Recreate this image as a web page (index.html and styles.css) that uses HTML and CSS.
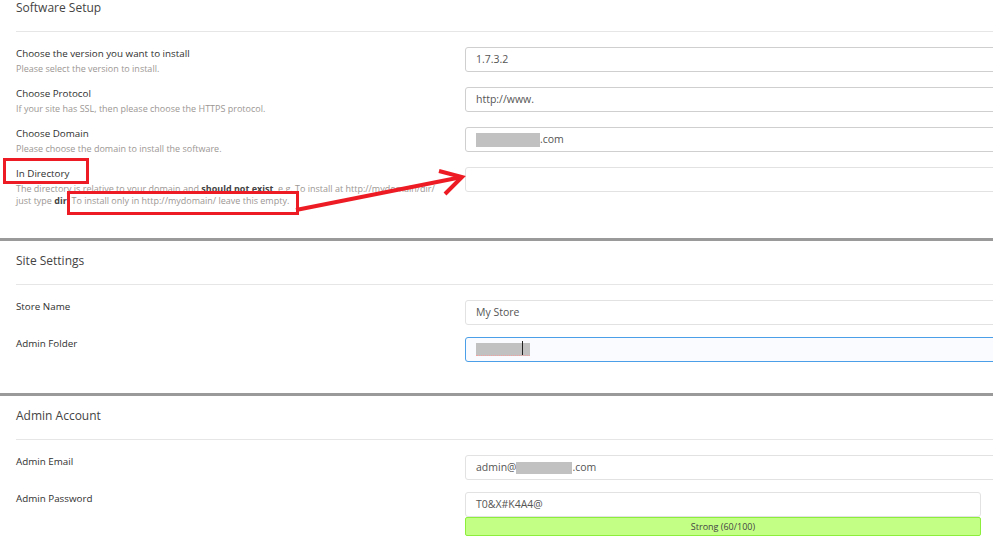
FILE: index.html
```html
<!DOCTYPE html>
<html lang="en">
<head>
    <meta charset="UTF-8">
    <meta name="viewport" content="width=device-width, initial-scale=1.0">
    <title>Software Setup</title>
    <link rel="stylesheet" href="styles.css">
</head>
<body>
<div class="page">

    <!-- SOFTWARE SETUP -->
    <section class="section section-first">
        <h2 class="section-title">Software Setup</h2>
        <div class="rows">
            <div class="row">
                <div class="row-label">
                    <div class="label">Choose the version you want to install</div>
                    <div class="desc">Please select the version to install.</div>
                </div>
                <div class="field">1.7.3.2</div>
            </div>
            <div class="row">
                <div class="row-label">
                    <div class="label">Choose Protocol</div>
                    <div class="desc">If your site has SSL, then please choose the HTTPS protocol.</div>
                </div>
                <div class="field">http://www.</div>
            </div>
            <div class="row">
                <div class="row-label">
                    <div class="label">Choose Domain</div>
                    <div class="desc">Please choose the domain to install the software.</div>
                </div>
                <div class="field"><span class="blur blur-domain"></span>.com</div>
            </div>
            <div class="row">
                <div class="row-label">
                    <div class="label">In Directory</div>
                    <div class="desc">The directory is relative to your domain and <b>should not exist</b>. e.g. To install at http://mydomain/dir/ just type <b>dir</b>. To install only in http://mydomain/ leave this empty.</div>
                </div>
                <div class="field field-light"></div>
            </div>
        </div>
    </section>

    <!-- SITE SETTINGS -->
    <section class="section">
        <h2 class="section-title">Site Settings</h2>
        <div class="rows">
            <div class="row">
                <div class="row-label"><div class="label">Store Name</div></div>
                <div class="field field-light">My Store</div>
            </div>
            <div class="row">
                <div class="row-label"><div class="label">Admin Folder</div></div>
                <div class="field field-focus"><span class="blur blur-folder"></span><span class="caret"></span></div>
            </div>
        </div>
    </section>

    <!-- ADMIN ACCOUNT -->
    <section class="section">
        <h2 class="section-title">Admin Account</h2>
        <div class="rows">
            <div class="row">
                <div class="row-label"><div class="label">Admin Email</div></div>
                <div class="field field-light">admin@<span class="blur blur-email"></span>.com</div>
            </div>
            <div class="row">
                <div class="row-label"><div class="label">Admin Password</div></div>
                <div class="password">
                    <div class="field field-light field-short">T0&amp;X#K4A4@</div>
                    <div class="strength">Strong (60/100)</div>
                </div>
            </div>
        </div>
    </section>

    <!-- red annotations drawn over the form -->
    <div class="mark mark-label"></div>
    <div class="mark mark-hint"></div>
    <svg class="arrow" width="993" height="548" viewBox="0 0 993 548">
        <g stroke="#ed1c24" stroke-width="4" fill="none" stroke-linejoin="miter">
            <line x1="296" y1="210" x2="462" y2="177"/>
            <polyline points="439,171 462,177 445,194"/>
        </g>
    </svg>
</div>
</body>
</html>
```

FILE: styles.css
```css
/* --- General --- */
html, body {
    margin: 0;
    background: #fff;
    overflow: hidden;
}

body {
    font-family: 'Open Sans', 'Noto Sans', sans-serif;
    color: #333;
    width: 993px;
    height: 548px;
}

.page {
    position: relative;
    width: 993px;
    height: 548px;
    overflow: hidden;
}

/* --- Sections --- */
.section {
    border-top: 3px solid #9a9a9a;
    padding: 12px 0 31px 16px;
}

.section-first {
    border-top: none;
    padding-top: 0;
    padding-bottom: 31px;
}

.section-title {
    margin: 0;
    font-size: 12px;
    line-height: 16px;
    font-weight: 400;
    color: #444;
    padding-bottom: 15px;
    border-bottom: 1px solid #e6e6e6;
}

.rows {
    padding-top: 14px;
}

.row {
    display: flex;
    align-items: flex-start;
    margin-bottom: 11px;
}

.row:last-child {
    margin-bottom: 0;
}

.row-label {
    width: 449px;
    flex: none;
    padding: 1px 22px 0 0;
    box-sizing: border-box;
}

.label {
    font-size: 9.8px;
    line-height: 14px;
    font-weight: 400;
    color: #2f2f2f;
}

.desc {
    margin-top: 2px;
    font-size: 9px;
    line-height: 12px;
    color: #9c9794;
}

.desc b {
    color: #444;
    font-weight: 700;
}

/* --- Inputs --- */
.field {
    flex: none;
    margin-top: 1px;
    width: 560px;
    height: 25px;
    box-sizing: border-box;
    border: 1px solid #cfcfcf;
    border-radius: 3px;
    padding: 0 10px;
    font-size: 10.5px;
    line-height: 23px;
    color: #555;
    background: #fff;
    display: flex;
    align-items: center;
}

.field-light {
    border-color: #e2e2e2;
}

.field-focus {
    border-color: #4a9fe8;
    background: #f9fbfe;
}

.field-short {
    width: 516px;
    margin-top: 0;
}

.password {
    margin-top: 1px;
}

.strength {
    width: 516px;
    height: 19px;
    box-sizing: border-box;
    background: #c3ff85;
    border: 1px solid #8def3c;
    border-radius: 2px;
    font-size: 9px;
    line-height: 17px;
    text-align: center;
    color: #444;
}

/* blurred-out parts of the screenshot */
.blur {
    display: inline-block;
    background: #c1c1c1;
}

.blur-domain {
    width: 64px;
    height: 14px;
}

.blur-folder {
    width: 54px;
    height: 12px;
    border-bottom: 1px dotted #f3a0a0;
}

.caret {
    display: inline-block;
    width: 1px;
    height: 14px;
    background: #222;
    margin-left: -8px;
    margin-top: -4px;
}

.blur-email {
    width: 56px;
    height: 12px;
}

/* --- Annotations --- */
.mark {
    position: absolute;
    border: 3px solid #ed1c24;
    box-sizing: border-box;
}

.mark-label {
    left: 3px;
    top: 158px;
    width: 86px;
    height: 26px;
}

.mark-hint {
    left: 67px;
    top: 191px;
    width: 232px;
    height: 24px;
}

.arrow {
    position: absolute;
    left: 0;
    top: 0;
    pointer-events: none;
}
```
